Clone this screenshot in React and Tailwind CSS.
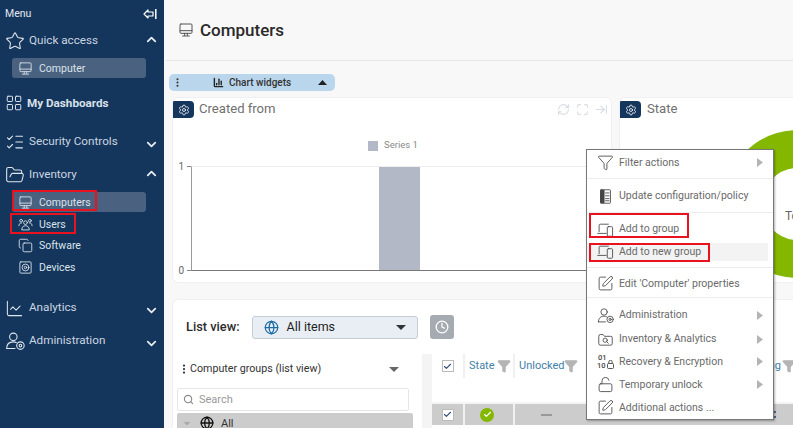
import React from "react";
import { Star, LayoutGrid, ListChecks, FolderOpen, Copy, ChartLine, ChevronUp, ChevronDown, Funnel, Maximize, RefreshCw, ArrowRightToLine, Settings, Globe, Clock, Search, Check, SquarePen, LockOpen, EllipsisVertical, ChartColumn } from "lucide-react";

const Caret = ({ className = "" }) => (
  <svg width="9" height="5" viewBox="0 0 9 5" className={className}><path d="M0 5 L4.5 0 L9 5Z" fill="currentColor" /></svg>
);
const CaretDown = ({ className = "" }) => (
  <svg width="10" height="5" viewBox="0 0 10 5" className={className}><path d="M0 0 L5 5 L10 0Z" fill="currentColor" /></svg>
);
const CaretRight = () => (
  <svg width="6" height="9" viewBox="0 0 6 9" className="ml-auto mr-[10px] shrink-0"><path d="M0 0 L6 4.5 L0 9Z" fill="#b4b4b4" /></svg>
);

const Svg = ({ size = 16, className = "", children, strokeWidth = 1.2 }) => (
  <svg width={size} height={size} viewBox="0 0 24 24" fill="none" stroke="currentColor" strokeWidth={strokeWidth} strokeLinecap="round" strokeLinejoin="round" className={className}>{children}</svg>
);

const DesktopIcon = (p) => (
  <Svg {...p}><rect x="3" y="3" width="18" height="14" rx="1.5" /><path d="M3 13h18" /><path d="M10 17v3M14 17v3M7 21h10" /></Svg>
);
const GroupIcon = (p) => (
  <Svg {...p}><circle cx="12" cy="9" r="3" /><path d="M6 20c0-4 2.5-6 6-6s6 2 6 6z" /><circle cx="5" cy="6" r="2.2" /><circle cx="19" cy="6" r="2.2" /><path d="M1.5 14c0-3 1.5-4.5 4-4.5M22.5 14c0-3-1.5-4.5-4-4.5" /></Svg>
);
const DiskIcon = (p) => (
  <Svg {...p}><rect x="3" y="3" width="18" height="18" rx="1.5" /><circle cx="12" cy="12" r="5.5" /><circle cx="12" cy="12" r="2" /></Svg>
);
const AdminIcon = (p) => (
  <Svg {...p}><circle cx="10" cy="7" r="4.5" /><path d="M2 21c0-5 3-8 8-8 1.5 0 2.5.2 3.5.7" /><path d="M2 21h10" /><circle cx="18.5" cy="17.5" r="4.5" /><circle cx="18.5" cy="17.5" r="1.6" /></Svg>
);
const BackIcon = ({ className = "" }) => (
  <svg width="14" height="12" viewBox="0 0 14 12" className={className} fill="none" stroke="currentColor" strokeWidth="1.2">
    <path d="M1 6 L5 2 V4 H10 V8 H5 V10Z" strokeLinejoin="round" /><path d="M12.8 1 V11" strokeWidth="1.5" />
  </svg>
);
const DocIcon = (p) => (
  <Svg {...p}><rect x="5" y="2.5" width="14" height="19" rx="1" /><rect x="5.5" y="3" width="4.5" height="18" fill="currentColor" /><path d="M12 7h5M12 11h5M12 15h5M12 18h5" /></Svg>
);
const AddIcon = (p) => (
  <Svg {...p}>
    <path d="M3 15V6a1.5 1.5 0 0 1 1.5-1.5H16" /><path d="M1 17.5h12" /><rect x="14.5" y="8" width="7.5" height="13.5" rx="1.5" />
  </Svg>
);
const FolderFindIcon = (p) => (
  <Svg {...p}><path d="M2.5 7a2 2 0 0 1 2-2h4l2 2.5h9a2 2 0 0 1 2 2V18a2 2 0 0 1-2 2h-15a2 2 0 0 1-2-2z" /><circle cx="11.5" cy="13" r="3" /><path d="M14 15.5l1.8 1.8" /></Svg>
);
const BinaryLockIcon = ({ className = "" }) => (
  <span className={`relative block w-[18px] h-[16px] text-[7.5px] font-medium text-[#444] ${className}`}>
    <span className="block h-[8px] leading-[8px] pl-[1px]">01</span>
    <span className="block h-[8px] leading-[8px]">10</span>
    <svg width="7" height="9" viewBox="0 0 7 9" className="absolute left-[10px] top-[6px]" fill="none" stroke="currentColor" strokeWidth="0.9"><rect x="0.5" y="3.5" width="6" height="5" rx="1" /><path d="M1.8 3.5V2a1.7 1.7 0 0 1 3.4 0v1.5" /></svg>
  </span>
);

const NavItem = ({ icon: I, label, open, bold, className = "", size = 21 }) => (
  <div className={`flex items-center h-[22px] pl-[5px] pr-[5px] ${className}`}>
    <span className="w-[24px] flex justify-start shrink-0"><I size={size} strokeWidth={1.3} className="text-[#dfe6ee]" /></span>
    <span className={bold ? "text-[11.7px] font-bold text-[#d8e0e9] -ml-[2px] pt-[1px]" : "text-[11.7px] text-[#cbd5e0]"}>{label}</span>
    {open !== undefined && (open
      ? <ChevronUp size={15} strokeWidth={2.8} className="ml-auto text-[#e8edf2] -mt-[4px]" />
      : <ChevronDown size={15} strokeWidth={2.8} className="ml-auto text-[#e8edf2] mt-[4px]" />)}
  </div>
);

const SubItem = ({ icon: I, label, active, className = "" }) => (
  <div className={`ml-[12px] w-[134px] h-[20px] flex items-center pl-[6px] text-[10.5px] text-[#dbe3eb] rounded-[3px] ${active ? "bg-[#4a617f]" : ""} ${className}`}>
    <I size={15} strokeWidth={1.4} className="mr-[6px] shrink-0" />
    <span className="pt-[1px]">{label}</span>
  </div>
);

const Sidebar = () => (
  <aside className="w-[164px] shrink-0 bg-[#14365c] h-full flex flex-col">
    <div className="flex items-center justify-between pl-[5px] pr-[7px] h-[14px] mt-[7px] text-[10.5px] text-[#e2e8ef]">
      <span>Menu</span>
      <BackIcon className="text-white" />
    </div>
    <NavItem icon={Star} label="Quick access" open className="mt-[9px]" size={20} />
    <SubItem icon={DesktopIcon} label="Computer" active className="mt-[6px]" />
    <NavItem icon={LayoutGrid} label="My Dashboards" bold className="mt-[14px]" size={18} />
    <NavItem icon={ListChecks} label="Security Controls" open={false} className="mt-[17px]" size={20} />
    <NavItem icon={FolderOpen} label="Inventory" open className="mt-[11px]" size={20} />
    <SubItem icon={DesktopIcon} label="Computers" active className="mt-[6px]" />
    <SubItem icon={GroupIcon} label="Users" className="mt-[2px]" />
    <SubItem icon={Copy} label="Software" className="mt-[1px]" />
    <SubItem icon={DiskIcon} label="Devices" className="mt-[2px]" />
    <NavItem icon={ChartLine} label="Analytics" open={false} className="mt-[20px]" size={19} />
    <NavItem icon={AdminIcon} label="Administration" open={false} className="mt-[11px]" size={20} />
  </aside>
);

const Gear = () => (
  <span className="w-[21px] h-[17px] bg-[#14365c] rounded-r-[4px] flex items-center justify-center shrink-0">
    <Settings size={12} strokeWidth={1.6} className="text-white" />
  </span>
);

const Tick = ({ v }) => (
  <span className="flex items-center gap-[3px]">{v}<i className="block w-[4px] h-px bg-[#888]" /></span>
);

const ChartCard = () => (
  <section className="w-[440px] h-[186px] shrink-0 bg-white rounded-[6px] border border-[#eef0f3] flex flex-col overflow-hidden">
    <div className="flex items-center h-[17px] mt-[3px]">
      <Gear />
      <span className="ml-[5px] text-[13.1px] text-[#6f6f6f] -mt-[2px]">Created from</span>
      <div className="ml-auto mr-[3px] flex items-center gap-[6px] text-[#d8dde4]">
        <RefreshCw size={13} /><Maximize size={13} /><ArrowRightToLine size={13} />
      </div>
    </div>
    <div className="flex items-center justify-center h-[11px] mt-[22px] gap-[6px] text-[9.5px] text-[#8a8a8a]">
      <span className="w-[10px] h-[10px] bg-[#b3b8c6] ml-[2px]" /><span>Series 1</span>
    </div>
    <div className="flex mt-[15px] h-[105px]">
      <div className="w-[18px] flex flex-col justify-between text-[10px] text-[#666] h-[119px] -mt-[7px] items-end">
        <Tick v="1" /><Tick v="0" />
      </div>
      <div className="flex-1 border-l border-b border-l-[#9a9a9a] border-b-[#777] border-t border-t-[#eee] flex justify-center">
        <div className="w-[41px] h-full bg-[#b3b8c6] -ml-[4px]" />
      </div>
    </div>
  </section>
);

const Donut = () => (
  <svg width="174" height="186" viewBox="619 97 174 186" className="absolute left-0 top-0">
    <circle cx="797" cy="203" r="55" fill="none" stroke="#84b800" strokeWidth="38" />
  </svg>
);

const StateCard = () => (
  <section className="relative flex-1 h-[186px] bg-white rounded-l-[6px] border border-[#eef0f3] border-r-0 overflow-hidden">
    <Donut />
    <div className="relative flex items-center h-[17px] mt-[3px]">
      <Gear />
      <span className="ml-[6px] text-[13.1px] text-[#6f6f6f] -mt-[2px]">State</span>
    </div>
    <span className="absolute left-[165px] top-[109px] text-[12px] text-[#666]">To</span>
  </section>
);

const Box = () => (
  <span className="w-[12px] h-[12px] bg-white border border-[#bbb] flex items-center justify-center">
    <Check size={9} strokeWidth={3} className="text-[#33507a]" />
  </span>
);

const ListPanel = () => (
  <section className="flex-1 mt-[16px] ml-[8px] bg-white rounded-tl-[6px] border-t border-l border-[#eef0f3] overflow-hidden">
    <div className="flex items-center h-[54px] pl-[13px]">
      <span className="text-[12.8px] text-[#2c2c2c] font-medium">List view:</span>
      <div className="ml-[12px] w-[166px] h-[23px] bg-[#e9eef4] border border-[#c6ccd5] rounded-[3px] flex items-center pl-[11px] pr-[11px]">
        <Globe size={15} className="text-[#1f6da6]" strokeWidth={2} />
        <span className="ml-[8px] text-[12.5px] text-[#222]">All items</span>
        <CaretDown className="ml-auto text-[#333]" />
      </div>
      <span className="ml-[12px] w-[24px] h-[24px] rounded-[3px] bg-[#a6abb2] flex items-center justify-center">
        <Clock size={14} className="text-white" strokeWidth={2.2} />
      </span>
    </div>
    <div className="flex">
      <div className="w-[249px] shrink-0 pl-[4px]">
        <div className="flex items-center h-[30px] pl-[4px] pr-[23px] text-[10.7px] text-[#333]">
          <EllipsisVertical size={12} strokeWidth={2.5} className="-ml-[3px]" />
          <span>Computer groups (list view)</span>
          <CaretDown className="ml-auto text-[#666]" />
        </div>
        <div className="mt-[4px] w-[232px] h-[23px] border border-[#e6e6e6] rounded-[2px] flex items-center pl-[5px] text-[11px] text-[#999]">
          <Search size={11} className="mr-[5px] text-[#888]" strokeWidth={2.4} /><span className="pt-[1px]">Search</span>
        </div>
        <div className="mt-[2px] w-[236px] h-[20px] bg-[#cccccc] rounded-[2px] flex items-center pl-[5px] text-[11px] text-[#333]">
          <CaretDown className="text-[#aaa] scale-75" />
          <Globe size={14} className="ml-[8px] text-[#111]" strokeWidth={2.2} />
          <span className="ml-[7px] leading-none">All</span>
        </div>
      </div>
      <div className="flex-1 bg-[#f4f4f4] pl-[10px] min-w-0 overflow-hidden">
        <div className="flex h-[24px] bg-white text-[11px] text-[#3f7fa8]">
          <div className="w-[33px] flex items-center justify-center border-r-2 border-[#f0f0f0]"><Box /></div>
          <div className="w-[50px] flex items-center pl-[4px] border-r-2 border-[#f0f0f0]">State<Funnel size={14} fill="#b5b5b5" stroke="#b5b5b5" className="ml-[2px]" /></div>
          <div className="w-[70px] flex items-center pl-[4px]">Unlocked<Funnel size={14} fill="#b5b5b5" stroke="#b5b5b5" /></div>
          <div className="flex-1 flex items-center justify-end -mr-[3px]">Config<Funnel size={14} fill="#b5b5b5" stroke="#b5b5b5" className="ml-[1px]" /></div>
        </div>
        <div className="h-[24px] bg-white" />
        <div className="flex h-[21px] mt-[2px] bg-[#cccccc]">
          <div className="w-[33px] flex items-center justify-center border-r-2 border-[#f0f0f0]"><Box /></div>
          <div className="w-[50px] flex items-center justify-center pr-[4px] border-r-2 border-[#f0f0f0]">
            <span className="w-[14px] h-[14px] rounded-full bg-[#84b800] flex items-center justify-center"><Check size={9} strokeWidth={3} className="text-white" /></span>
          </div>
          <div className="w-[66px] flex items-center justify-center pr-[4px]"><span className="w-[11px] h-[2px] bg-[#999]" /></div>
          <div className="ml-auto mr-[17px] flex flex-col justify-center gap-[3px]">
            <span className="block w-[2px] h-[2px] bg-[#4a6a8e]" />
            <span className="block w-[2px] h-[2px] bg-[#4a6a8e]" />
          </div>
        </div>
        <div className="h-[8px] bg-white" />
      </div>
    </div>
  </section>
);

const MenuRow = ({ icon: I, label, arrow, className = "h-[23.3px]" }) => (
  <div className={`flex items-center pl-[10px] text-[10.5px] text-[#6a6a6a] ${className}`}>
    <span className="w-[22px] shrink-0"><I size={17} strokeWidth={1.2} className="text-[#444]" /></span>
    <span>{label}</span>
    {arrow && <CaretRight />}
  </div>
);

const Divider = ({ className }) => <div className={`h-px bg-[#ececec] ${className}`} />;

const Redbox = ({ className }) => <div className={`absolute border-[2px] border-[#e8131f] ${className}`} />;

const ContextMenu = () => (
  <div className="absolute left-[586px] top-[149px] w-[188px] h-[271px] bg-white border border-[#777] shadow-[1px_1px_2px_rgba(0,0,0,0.3)] flex flex-col pt-[1px]">
    <MenuRow icon={Funnel} label="Filter actions" arrow />
    <Divider className="mt-[4px] mb-[6px]" />
    <MenuRow icon={DocIcon} label="Update configuration/policy" />
    <Divider className="mt-[4px] mb-[5px]" />
    <MenuRow icon={AddIcon} label="Add to group" />
    <MenuRow icon={AddIcon} label="Add to new group" className="h-[18px] my-[2.5px] bg-[#f3f3f3] mr-[5px]" />
    <Divider className="mt-[4px] mb-[4px]" />
    <MenuRow icon={SquarePen} label="Edit 'Computer' properties" />
    <Divider className="mt-[2px] mb-[6px]" />
    <MenuRow icon={AdminIcon} label="Administration" arrow />
    <MenuRow icon={FolderFindIcon} label="Inventory & Analytics" arrow className="h-[23.3px] mt-[1px]" />
    <MenuRow icon={BinaryLockIcon} label="Recovery & Encryption" arrow />
    <MenuRow icon={LockOpen} label="Temporary unlock" arrow />
    <MenuRow icon={SquarePen} label="Additional actions ..." />
  </div>
);

export default function App() {
  return (
    <div className="relative w-[793px] h-[428px] overflow-hidden flex bg-[#f8f8f8] font-['Roboto',sans-serif]">
      <Sidebar />
      <main className="flex-1 flex flex-col min-w-0 h-full">
        <header className="h-[61px] shrink-0 border-b border-[#e6e6e6] flex items-center pl-[12px] ml-[2px]">
          <DesktopIcon size={16} strokeWidth={1.5} className="text-[#555]" />
          <h1 className="ml-[6px] text-[17px] font-medium text-[#2a2a2a] relative top-[1px]">Computers</h1>
        </header>
        <div className="ml-[5px] mt-[13px] w-[166px] h-[17px] bg-[#bad6ec] rounded-[5px] flex items-center pl-[3px] pr-[8px] text-[10px] text-[#333] shrink-0">
          <EllipsisVertical size={11} strokeWidth={2.5} />
          <ChartColumn size={11} strokeWidth={3} className="ml-[30px] text-[#222]" />
          <span className="ml-[5px] font-medium">Chart widgets</span>
          <Caret className="ml-auto text-[#222]" />
        </div>
        <div className="flex ml-[8px] mt-[6px] gap-[7px] shrink-0">
          <ChartCard />
          <StateCard />
        </div>
        <ListPanel />
      </main>
      <ContextMenu />
      <Redbox className="left-[12px] top-[190px] w-[85px] h-[21px]" />
      <Redbox className="left-[10px] top-[213px] w-[66px] h-[21px]" />
      <Redbox className="left-[589px] top-[213px] w-[100px] h-[25px]" />
      <Redbox className="left-[589px] top-[243px] w-[121px] h-[19px]" />
    </div>
  );
}
